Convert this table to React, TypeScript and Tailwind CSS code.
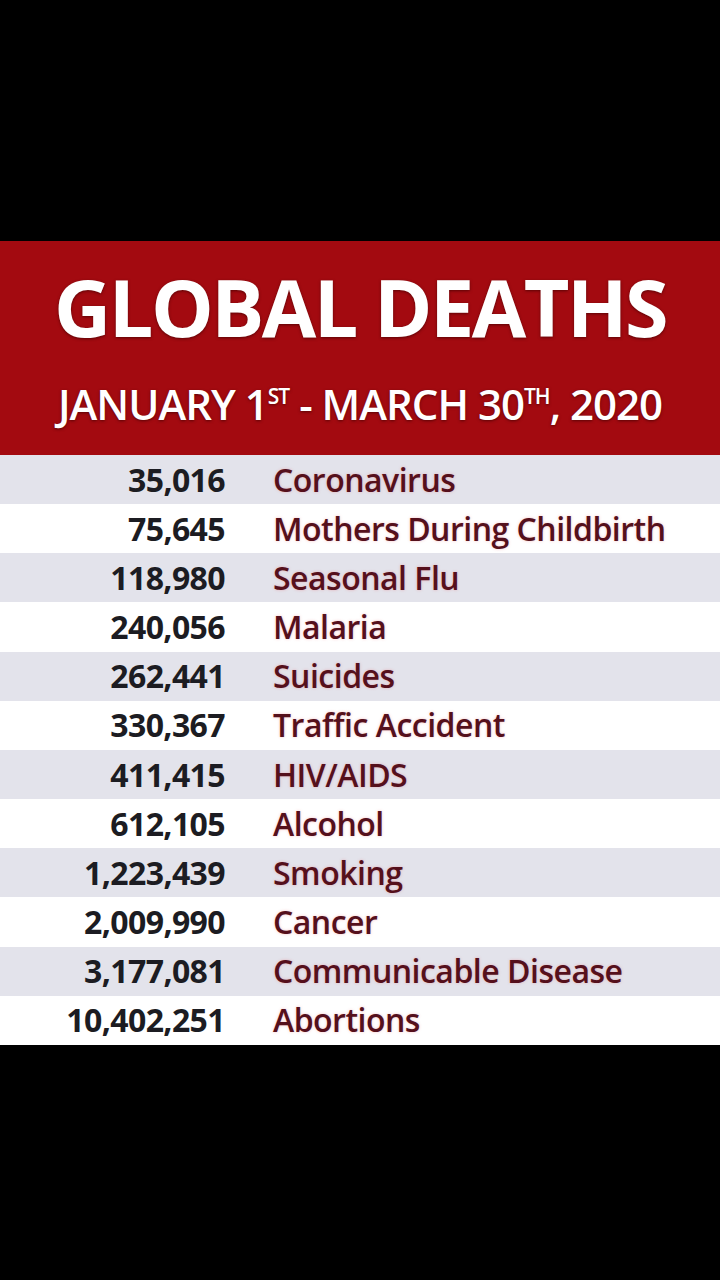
const rows: [string, string][] = [
  ["35,016", "Coronavirus"],
  ["75,645", "Mothers During Childbirth"],
  ["118,980", "Seasonal Flu"],
  ["240,056", "Malaria"],
  ["262,441", "Suicides"],
  ["330,367", "Traffic Accident"],
  ["411,415", "HIV/AIDS"],
  ["612,105", "Alcohol"],
  ["1,223,439", "Smoking"],
  ["2,009,990", "Cancer"],
  ["3,177,081", "Communicable Disease"],
  ["10,402,251", "Abortions"],
];

export default function App() {
  return (
    <div className="flex h-[1280px] w-[720px] flex-col bg-black font-['Open_Sans',sans-serif]">
      <div className="h-[241px] shrink-0" />
      {/* header */}
      <div className="flex h-[214px] shrink-0 flex-col items-center bg-[#a30a10] text-white [text-shadow:0_1px_3px_rgba(60,0,0,0.7)]">
        <h1 className="mt-[14px] text-[79px] leading-[104px] font-bold tracking-[-2.5px]">GLOBAL DEATHS</h1>
        <p className="mt-[15px] text-[42px] leading-[60px] font-semibold tracking-[-1px]">
          JANUARY 1<span className="align-[16px] text-[21px] leading-none">ST</span> - MARCH 30
          <span className="align-[16px] text-[21px] leading-none">TH</span>, 2020
        </p>
      </div>
      {/* table */}
      <div className="flex flex-col">
        {rows.map(([n, label], i) => (
          <div
            key={label}
            className={`flex h-[49.17px] items-center ${i % 2 === 0 ? "bg-[#e3e3eb]" : "bg-white"}`}
          >
            <div className="w-[225px] text-right text-[32px] font-bold tracking-[-0.6px] text-[#1c1c22]">{n}</div>
            <div className="ml-[48px] text-[32px] font-semibold tracking-[-0.5px] text-[#55101c] [text-shadow:0_0_3px_rgba(230,80,90,0.35)]">
              {label}
            </div>
          </div>
        ))}
      </div>
    </div>
  );
}
